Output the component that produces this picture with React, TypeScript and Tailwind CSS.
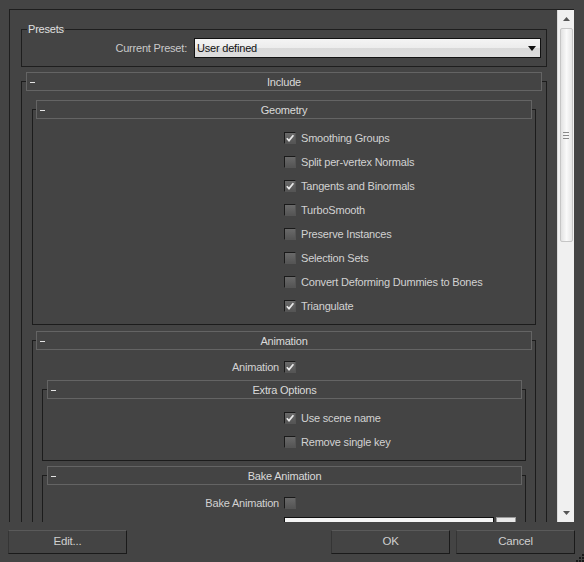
import React from "react";

const font = "font-['Liberation_Sans',Arial,sans-serif]";

function Check({ on }: { on?: boolean }) {
  return (
    <div className="w-[12px] h-[12px] shrink-0 border-t border-l border-[#1a1a1a] border-r border-b border-r-[#555] border-b-[#555] bg-gradient-to-b from-[#6a6a6a] to-[#555]">
      {on && (
        <svg width="10" height="10" viewBox="0 0 10 10" className="block">
          <path d="M1.8 5.2 L4 7.6 L8.4 2.2" fill="none" stroke="#eaeaea" strokeWidth="1.7" />
        </svg>
      )}
    </div>
  );
}

function Header({ title, m }: { title: string; m: string }) {
  return (
    <div className={`-mt-[10px] h-[19px] border border-[#646464] bg-[#444] grid grid-cols-[24px_1fr_24px] items-center ${m}`}>
      <div className="ml-[3px] w-[5px] h-[1px] bg-[#e4e4e4]" />
      <div className="text-center leading-[18px] text-[#dadada]">{title}</div>
      <div />
    </div>
  );
}

function Rollout({
  title,
  m,
  className,
  children,
}: {
  title: string;
  m: string;
  className?: string;
  children?: React.ReactNode;
}) {
  return (
    <div className={`border border-[#1c1c1c] ${className ?? ""}`}>
      <Header title={title} m={m} />
      {children}
    </div>
  );
}

function CheckRow({ label, on, pad }: { label: string; on?: boolean; pad: string }) {
  return (
    <div className={`h-[24px] flex items-center gap-[5px] ${pad}`}>
      <Check on={on} />
      <span>{label}</span>
    </div>
  );
}

function LabelCheck({ label, on, w }: { label: string; on?: boolean; w: string }) {
  return (
    <div className="h-[24px] flex items-center gap-[5px]">
      <span className={`${w} text-right`}>{label}</span>
      <Check on={on} />
    </div>
  );
}

function Scrollbar() {
  return (
    <div className="w-[17px] h-full bg-[#f0f0f0] border-l border-[#dadada] flex flex-col items-center">
      <div className="h-[18px] w-full flex items-center justify-center">
        <svg width="7" height="4" viewBox="0 0 7 4">
          <path d="M0 4 L3.5 0 L7 4 Z" fill="#555" />
        </svg>
      </div>
      <div className="w-[13px] h-[214px] rounded-[2px] border border-[#c6c6c6] bg-gradient-to-r from-[#e2e2e2] via-[#fafafa] to-[#e6e6e6] flex items-center justify-center">
        <div className="flex flex-col gap-[2px]">
          <div className="w-[6px] h-[1px] bg-[#8a8a8a]" />
          <div className="w-[6px] h-[1px] bg-[#8a8a8a]" />
          <div className="w-[6px] h-[1px] bg-[#8a8a8a]" />
        </div>
      </div>
      <div className="flex-1" />
      <div className="h-[18px] w-full flex items-center justify-center">
        <svg width="7" height="4" viewBox="0 0 7 4">
          <path d="M0 0 L3.5 4 L7 0 Z" fill="#555" />
        </svg>
      </div>
    </div>
  );
}

function Button({ label }: { label: string }) {
  return (
    <button className="w-[119px] h-[24px] border border-t-[#5a5a5a] border-l-[#353535] border-r-[#1a1a1a] border-b-[#1a1a1a] bg-[#444] text-[11.5px] text-[#cfcfcf]">
      {label}
    </button>
  );
}

export default function App() {
  return (
    <div className={`relative w-[584px] h-[562px] overflow-hidden bg-[#444] text-[11px] tracking-[-0.2px] text-[#d2d2d2] ${font}`}>
      {/* scroll pane */}
      <div className="pt-[9px] pl-[9px] pr-[10px]">
        <div className="h-[513px] flex border-t border-l border-[#1e1e1e]">
          <div className="flex-1 overflow-hidden pl-[11px] pr-[10px]">
            {/* Presets */}
            <div className="mt-[19px] h-[38px] border border-[#1e1e1e]">
              <div className="-mt-[7px] ml-[5px] w-fit px-[1px] bg-[#444] leading-[13px] text-[#e0e0e0]">Presets</div>
              <div className="mt-[2px] flex items-center justify-end pr-[5px]">
                <span className="mr-[7px] text-[#cacaca]">Current Preset:</span>
                <div className="w-[347px] h-[20px] border border-[#111] flex items-center justify-between bg-[linear-gradient(#f4f4f4_0%,#ececec_50%,#d9d9d9_50%,#dcdcdc_100%)]">
                  <span className="ml-[2px] text-[#111]">User defined</span>
                  <svg width="8" height="5" viewBox="0 0 8 5" className="mr-[4px]">
                    <path d="M0 0 L8 0 L4 5 Z" fill="#111" />
                  </svg>
                </div>
              </div>
            </div>

            {/* Include */}
            <Rollout title="Include" m="-mx-[6px]" className="mt-[14px] px-[10px] pb-[20px]">
              <Rollout title="Geometry" m="mx-[3px]" className="mt-[18px]">
                <div className="pt-[7px] pb-[6px]">
                  <CheckRow pad="pl-[251px]" on label="Smoothing Groups" />
                  <CheckRow pad="pl-[251px]" label="Split per-vertex Normals" />
                  <CheckRow pad="pl-[251px]" on label="Tangents and Binormals" />
                  <CheckRow pad="pl-[251px]" label="TurboSmooth" />
                  <CheckRow pad="pl-[251px]" label="Preserve Instances" />
                  <CheckRow pad="pl-[251px]" label="Selection Sets" />
                  <CheckRow pad="pl-[251px]" label="Convert Deforming Dummies to Bones" />
                  <CheckRow pad="pl-[251px]" on label="Triangulate" />
                </div>
              </Rollout>

              <Rollout title="Animation" m="-mx-[6px]" className="mt-[15px] px-[9px] pb-[20px]">
                <div className="mt-[5px]">
                  <LabelCheck w="w-[237px]" on label="Animation" />
                </div>
                <Rollout title="Extra Options" m="ml-[4px] mr-[3px]" className="mt-[10px]">
                  <div className="pt-[7px] pb-[6px]">
                    <CheckRow pad="pl-[241px]" on label="Use scene name" />
                    <CheckRow pad="pl-[241px]" label="Remove single key" />
                  </div>
                </Rollout>
                <Rollout title="Bake Animation" m="ml-[4px] mr-[3px]" className="mt-[14px]">
                  <div className="pt-[6px] pb-[6px]">
                    <LabelCheck w="w-[236px]" label="Bake Animation" />
                    <div className="h-[24px] flex items-center">
                      <span className="w-[236px] text-right">Start:</span>
                      <div className="ml-[5px] w-[210px] h-[20px] border border-[#111] bg-[#f4f4f4]" />
                      <div className="ml-[2px] w-[20px] h-[20px] border border-[#9a9a9a] bg-[#e8e8e8]" />
                    </div>
                  </div>
                </Rollout>
              </Rollout>
            </Rollout>
          </div>
          <Scrollbar />
        </div>
      </div>

      {/* buttons */}
      <div className="mt-[8px] flex pl-[8px] pr-[9px]">
        <Button label="Edit..." />
        <div className="flex-1" />
        <Button label="OK" />
        <div className="w-[6px]" />
        <Button label="Cancel" />
      </div>

      {/* resize grip */}
      <svg width="10" height="10" viewBox="0 0 10 10" className="absolute right-0 bottom-0">
        <rect x="8" y="2" width="2" height="2" fill="#1a1a1a" />
        <rect x="5" y="5" width="2" height="2" fill="#1a1a1a" />
        <rect x="8" y="5" width="2" height="2" fill="#1a1a1a" />
        <rect x="2" y="8" width="2" height="2" fill="#1a1a1a" />
        <rect x="5" y="8" width="2" height="2" fill="#1a1a1a" />
        <rect x="8" y="8" width="2" height="2" fill="#1a1a1a" />
      </svg>
    </div>
  );
}
